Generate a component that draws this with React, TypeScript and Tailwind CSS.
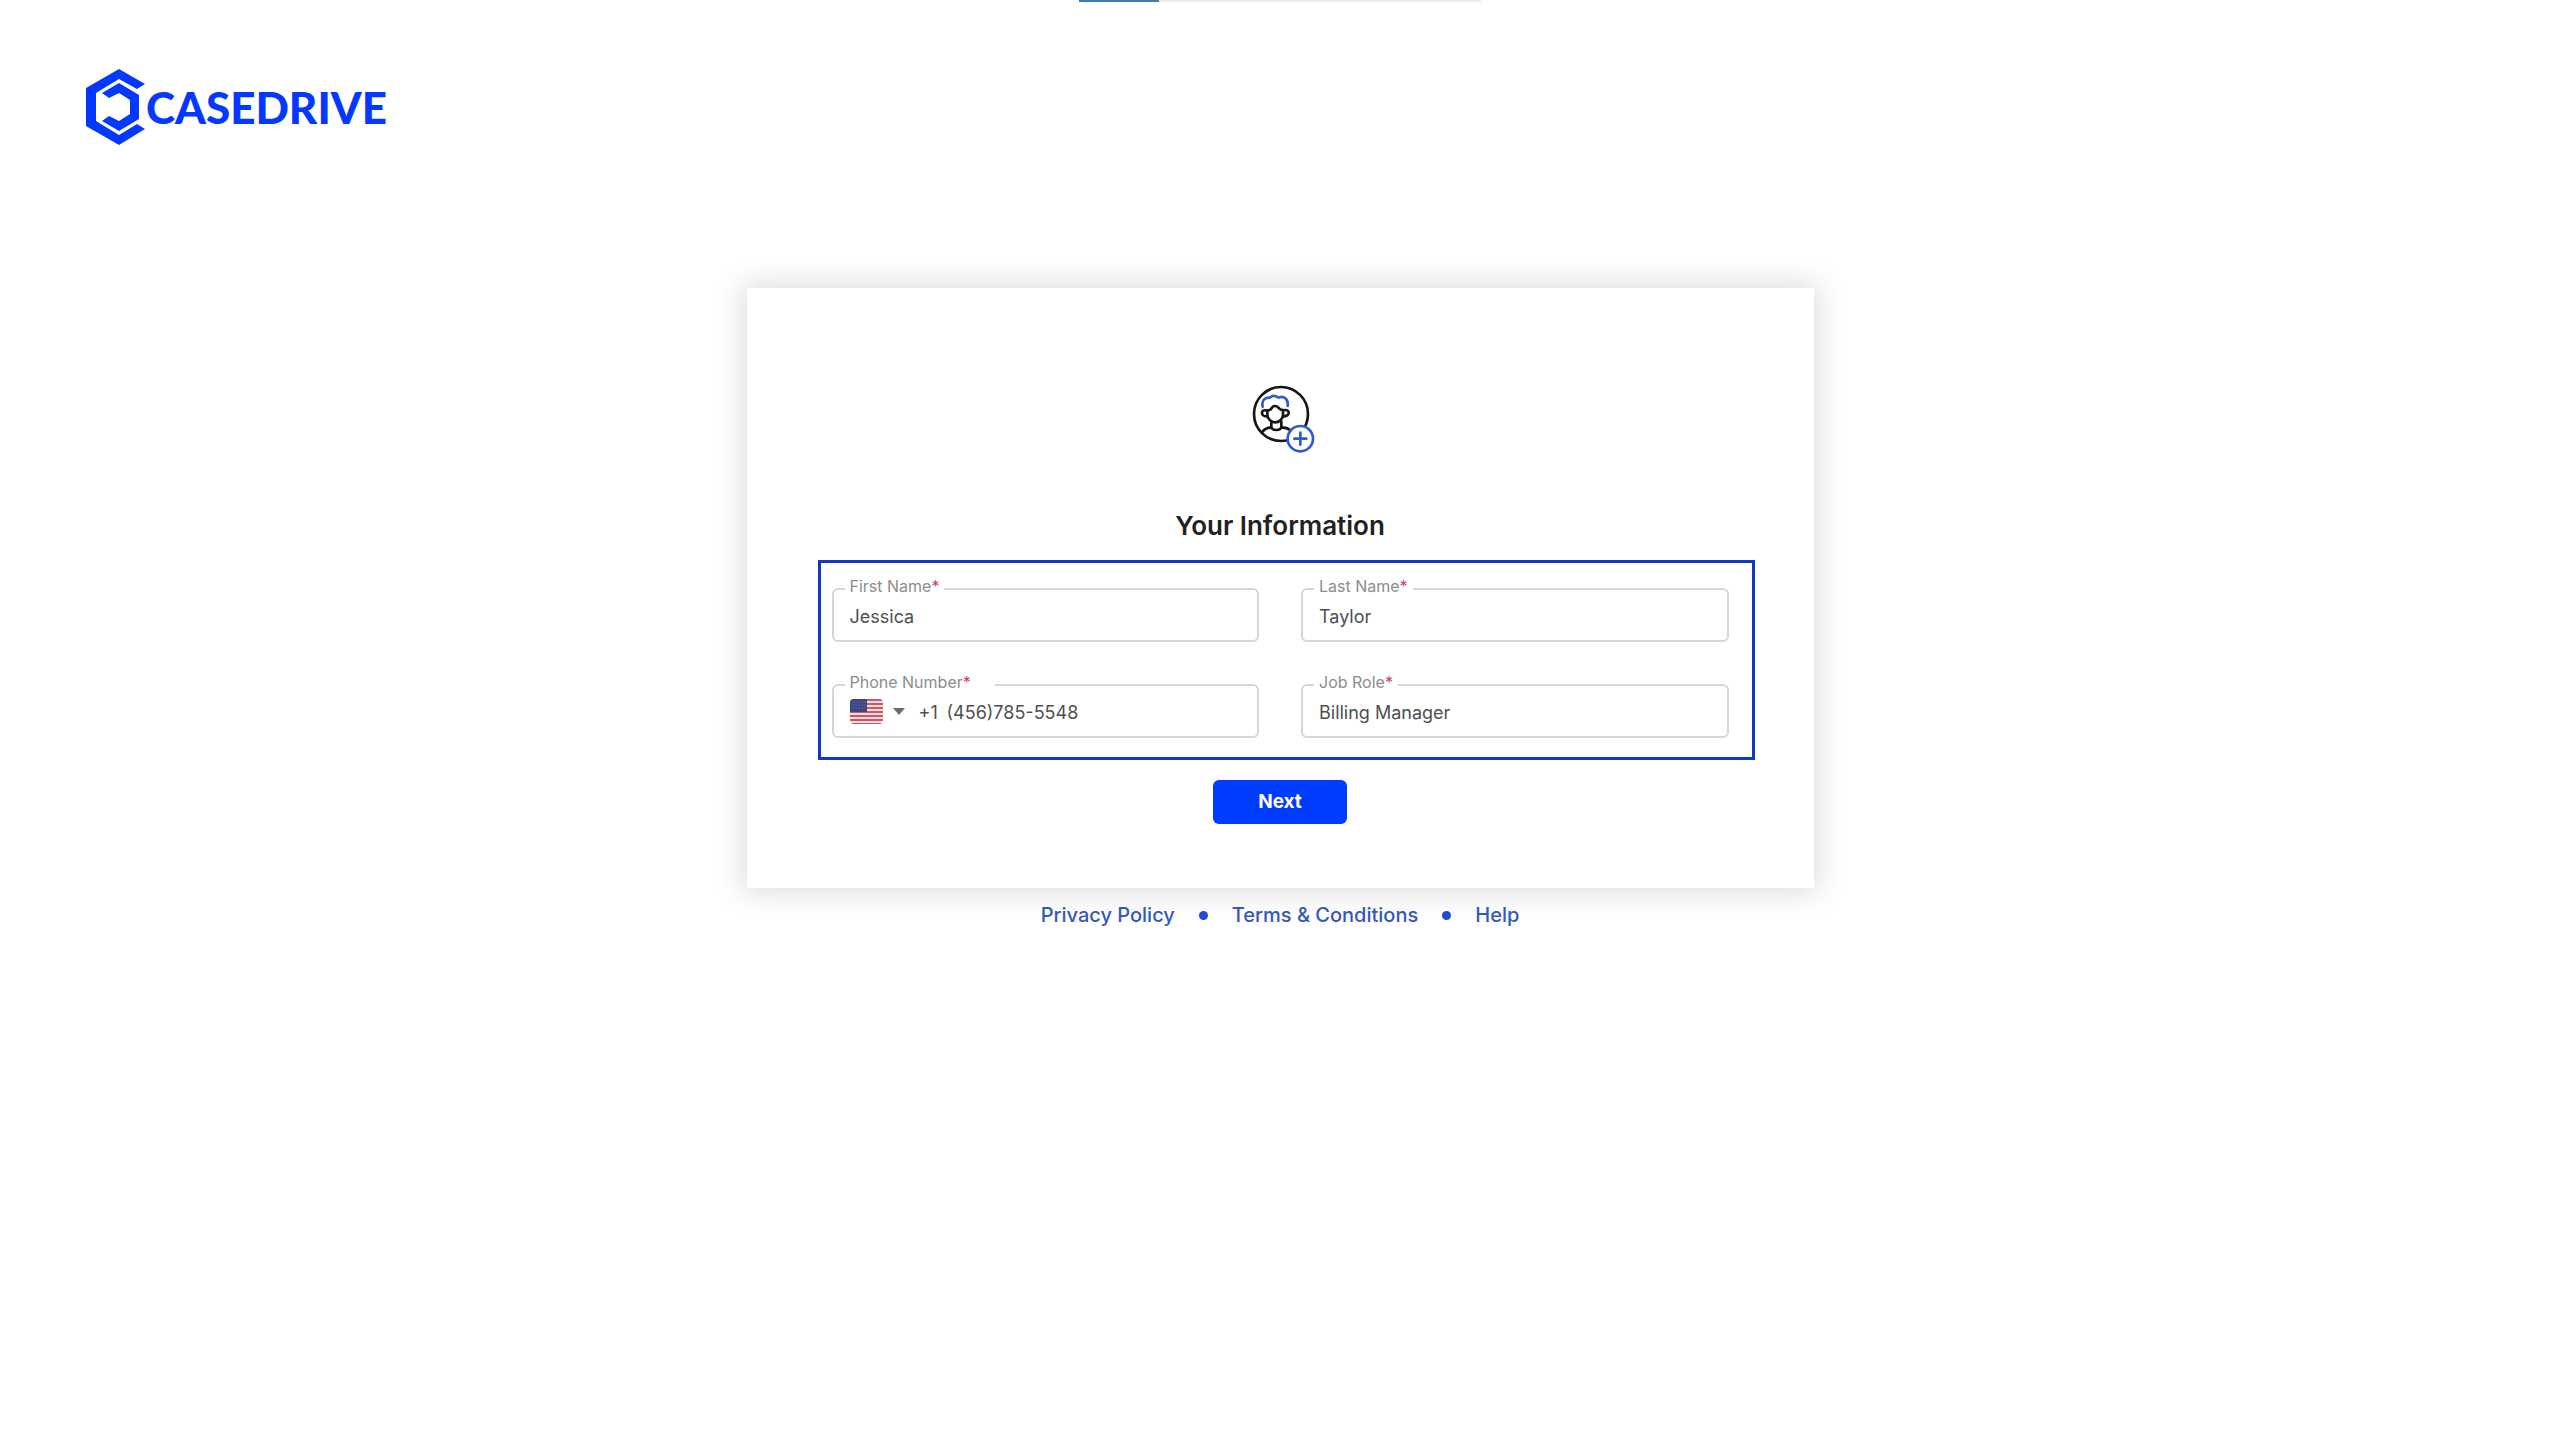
import React, { useState } from 'react';

interface FieldProps {
  id: string;
  label: string;
  value: string;
  onChange: (value: string) => void;
}

const fieldBox = 'relative flex h-[54px] items-center rounded-md border-2 border-[#d6d6d6]';
const fieldLabel = 'absolute -top-[15px] left-[11px] bg-white px-[5px] text-[16px] leading-[22px] text-[#8c8c8c]';
const fieldText = 'h-full min-w-0 flex-1 bg-transparent pt-0.5 text-[18px] text-[#4f4f4f] outline-none';

function Logo() {
  return (
    <a href="#" className="flex w-fit items-center text-[#0538ff]" aria-label="CaseDrive">
      <svg width="60" height="78" viewBox="0 0 60 78" fill="currentColor">
        <path d="M33 1 59 16 51 21 33 11 10 25V53L33 67 51 56 59 61 33 77 0 58V20Z" />
        <path d="M16 25 33 15 53 27V51L33 63 16 53 23 48 33 53 44 46V32L33 25 23 30Z" />
      </svg>
      <span className="font-['Lato',sans-serif] text-[44px] leading-[52px] font-black">CASEDRIVE</span>
    </a>
  );
}

function AddUserIcon() {
  return (
    <svg width="69" height="70" viewBox="47 42 207 210" fill="none" strokeWidth="8" strokeLinecap="round" strokeLinejoin="round">
      <g stroke="#161616">
        <circle cx="152" cy="132" r="81" />
        <path d="M111 121c8 1 11-2 14-8 4-7 14-6 19 0 4 5 9 7 14 7v15c0 12-12 22-23 22s-24-10-24-22Z" />
        <path d="M110 122c-18-7-22 17-1 17M159 121c20-6 23 18 0 18" />
        <path d="M123 155v16c2 12 28 12 30 0v-16M95 187c5-8 15-14 28-15M153 172c12 0 20 3 27 9" />
      </g>
      <path d="M97 110c-4-17 6-29 21-27 13-11 23-2 27 0 14-7 30 3 27 25" stroke="#2f5bd0" />
      <circle cx="210" cy="206" r="38" fill="#fff" stroke="#2f5bd0" />
      <path d="M210 188v36M192 206h36" stroke="#2f5bd0" />
    </svg>
  );
}

function UsFlag() {
  return (
    <svg width="33" height="25" viewBox="0 0 33 25" className="rounded-sm">
      <rect width="33" height="25" fill="#f3dfe2" />
      {[0, 4, 8, 12, 16, 20, 24].map((y) => (
        <rect key={y} y={y} width="33" height="2" fill="#cf5663" />
      ))}
      <rect width="17" height="13" fill="#3c4480" />
      {[3, 6, 9].map((y) =>
        [3, 6, 9, 12, 15].map((x) => <circle key={`${x}-${y}`} cx={x} cy={y} r="0.6" fill="#8f97c4" />)
      )}
    </svg>
  );
}

function TextField({ id, label, value, onChange }: FieldProps) {
  return (
    <div className={fieldBox}>
      <label htmlFor={id} className={fieldLabel}>
        {label}
        <span className="text-[#d0405a]">*</span>
      </label>
      <input id={id} value={value} onChange={(e) => onChange(e.target.value)} className={`${fieldText} px-4`} />
    </div>
  );
}

function PhoneField({ id, label, value, onChange }: FieldProps) {
  return (
    <div className={fieldBox}>
      <label htmlFor={id} className={`${fieldLabel} pr-6`}>
        {label}
        <span className="text-[#d0405a]">*</span>
      </label>
      <div className="relative flex h-full items-center">
        <div className="pointer-events-none absolute left-4 flex items-center gap-2.5">
          <UsFlag />
          <svg width="12" height="7" viewBox="0 0 12 7" fill="#6b6b6b">
            <path d="M0 0h12L6 7Z" />
          </svg>
        </div>
        <select aria-label="Country code" className="h-full appearance-none bg-transparent pt-0.5 pr-2 pl-[85px] text-[18px] text-[#4f4f4f] outline-none">
          <option>+1</option>
        </select>
      </div>
      <input id={id} type="tel" value={value} onChange={(e) => onChange(e.target.value)} className={fieldText} />
    </div>
  );
}

export default function App() {
  const [firstName, setFirstName] = useState('Jessica');
  const [lastName, setLastName] = useState('Taylor');
  const [phone, setPhone] = useState('(456)785-5548');
  const [jobRole, setJobRole] = useState('Billing Manager');

  return (
    <div className="min-h-screen bg-white font-['Inter',sans-serif]">
      <div className="mx-auto h-0.5 w-[402px] bg-[#ececec]">
        <div className="h-full w-1/5 bg-[#3a7cbd]" />
      </div>

      <header className="px-[86px] pt-[66px]">
        <Logo />
      </header>

      <main className="mx-auto mt-[142px] w-full max-w-[1067px]">
        <form
          onSubmit={(e) => e.preventDefault()}
          className="flex flex-col items-center bg-white px-[59px] pt-24 pb-16 shadow-[0_0_28px_4px_rgba(0,0,0,0.14)]"
        >
          <AddUserIcon />
          <h1 className="mt-14 text-[26px] leading-8 font-semibold text-[#222]">Your Information</h1>

          <div className="mt-[18px] ml-3 grid grid-cols-2 gap-[42px] self-stretch border-3 border-[#1339c4] pt-[25px] pr-[23px] pb-[19px] pl-[11px]">
            <TextField id="first-name" label="First Name" value={firstName} onChange={setFirstName} />
            <TextField id="last-name" label="Last Name" value={lastName} onChange={setLastName} />
            <PhoneField id="phone" label="Phone Number" value={phone} onChange={setPhone} />
            <TextField id="job-role" label="Job Role" value={jobRole} onChange={setJobRole} />
          </div>

          <button type="submit" className="mt-5 h-11 w-[134px] rounded-md bg-[#003cff] text-[19px] font-bold text-white">
            Next
          </button>
        </form>

        <nav className="mt-[13px] flex items-center justify-center gap-6 text-[20px] leading-7 font-medium text-[#3458b8]">
          <a href="#">Privacy Policy</a>
          <span className="size-[9px] rounded-full bg-[#1f4bd0]" />
          <a href="#">Terms &amp; Conditions</a>
          <span className="size-[9px] rounded-full bg-[#1f4bd0]" />
          <a href="#">Help</a>
        </nav>
      </main>
    </div>
  );
}
